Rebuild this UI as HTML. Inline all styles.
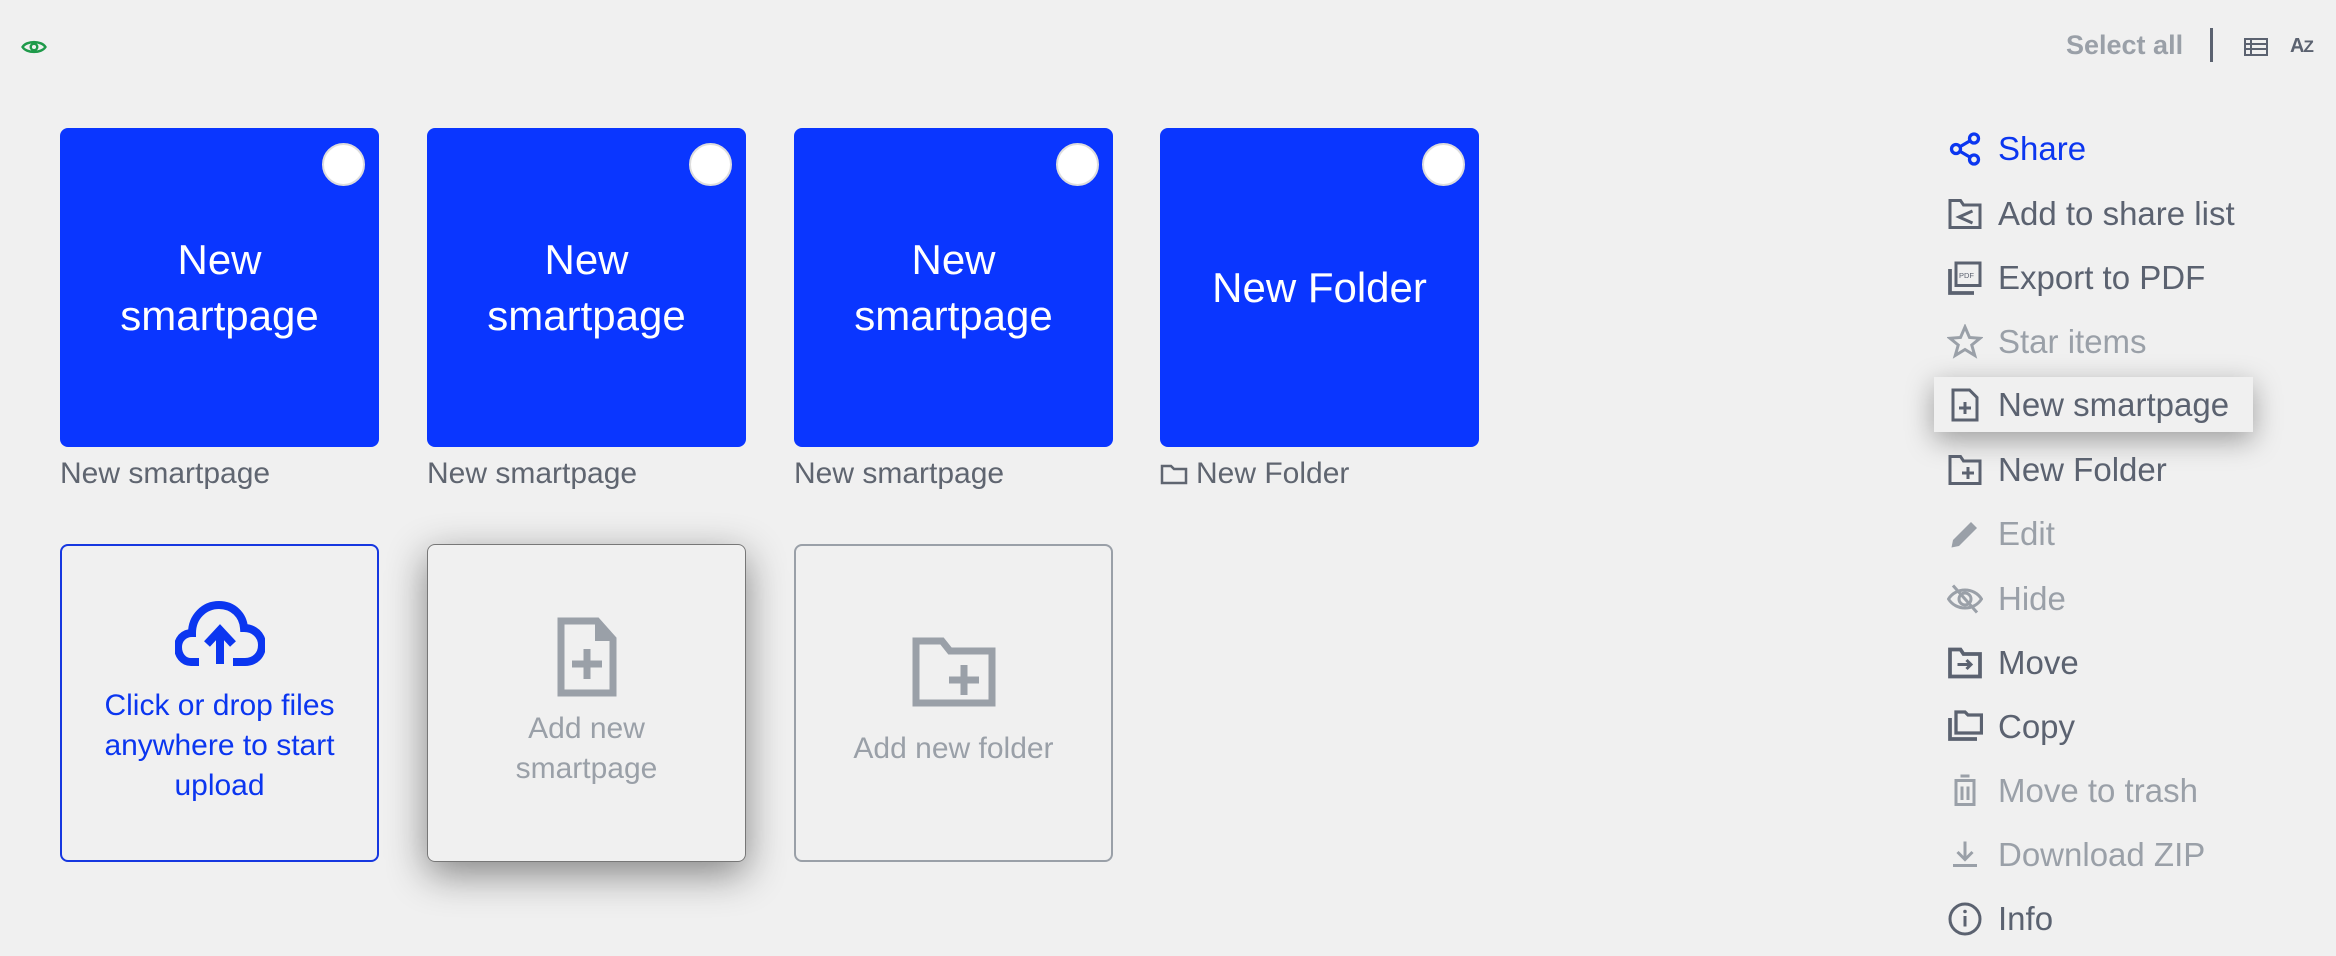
<!DOCTYPE html>
<html><head><meta charset="utf-8"><style>
*{box-sizing:border-box;margin:0;padding:0}
body{width:2336px;height:956px;background:#f0f0f0;font-family:"Liberation Sans",sans-serif;position:relative;overflow:hidden}
.a{position:absolute}
.card{position:absolute;top:128px;width:319px;height:319px;background:#0a36ff;border-radius:8px;color:#fff;font-size:42px;display:flex;align-items:center;justify-content:center;text-align:center;line-height:56px}
.chk{position:absolute;right:14px;top:15px;width:43px;height:43px;border-radius:50%;background:#fff;border:2px solid #ddd}
.lbl{position:absolute;top:457px;font-size:30px;color:#5f6570}
.box{position:absolute;top:544px;width:319px;height:318px;border-radius:8px;display:flex;flex-direction:column;align-items:center;justify-content:center;text-align:center;font-size:30px;line-height:40px}
.mi{position:absolute;left:1944px;height:56px;display:flex;align-items:center;font-size:33px;color:#5b6270}
.mi svg{width:36px;height:36px;margin-left:3px;margin-right:15px}
.dim{color:#9aa0a8}
</style></head><body>
<svg class="a" style="left:20px;top:38px" width="28" height="18" viewBox="0 0 32 22"><path d="M2 11C7 3 25 3 30 11C25 19 7 19 2 11Z" fill="none" stroke="#1f9a4a" stroke-width="3"/><circle cx="16" cy="11" r="4" fill="none" stroke="#1f9a4a" stroke-width="3"/></svg>
<div class="a" style="left:2066px;top:30px;font-size:27px;font-weight:bold;color:#9aa0a8">Select all</div>
<div class="a" style="left:2210px;top:28px;width:3px;height:34px;background:#5b6270"></div>
<svg class="a" style="left:2244px;top:38px" width="24" height="18" viewBox="0 0 24 18"><rect x="1" y="1" width="22" height="16" fill="none" stroke="#5b6270" stroke-width="2"/><path d="M1 6H23M1 11H23M7 1V17" stroke="#5b6270" stroke-width="2"/></svg>
<div class="a" style="left:2290px;top:35px;font-size:20px;color:#5b6270;font-weight:bold;letter-spacing:-1px">A<span style="font-size:17px">Z</span></div>

<div class="card" style="left:60px"><div>New<br>smartpage</div><div class="chk"></div></div>
<div class="card" style="left:427px"><div>New<br>smartpage</div><div class="chk"></div></div>
<div class="card" style="left:794px"><div>New<br>smartpage</div><div class="chk"></div></div>
<div class="card" style="left:1160px"><div>New Folder</div><div class="chk"></div></div>
<div class="lbl" style="left:60px">New smartpage</div>
<div class="lbl" style="left:427px">New smartpage</div>
<div class="lbl" style="left:794px">New smartpage</div>
<div class="lbl" style="left:1160px"><svg width="28" height="22" viewBox="0 0 28 22" style="vertical-align:-2px;margin-right:8px"><path d="M2 3H11L14 6H26V20H2Z" fill="none" stroke="#5f6570" stroke-width="2.5"/></svg>New Folder</div>

<div class="box" style="left:60px;border:2px solid #1637e0;color:#0b36f0">
<svg width="90" height="70" viewBox="0 0 90 70"><path d="M24 62H16C8 62 3 55 3 47C3 39 9 33 17 33C17 17 29 5 44 5C58 5 68 15 69 28C79 28 87 35 87 45C87 55 80 62 70 62H58" fill="none" stroke="#0b36f0" stroke-width="8"/><path d="M45 64V32M32 44L45 30L58 44" fill="none" stroke="#0b36f0" stroke-width="8"/></svg>
<div style="margin-top:16px">Click or drop files<br>anywhere to start<br>upload</div></div>
<div class="box" style="left:427px;border:1px solid #777;box-shadow:0 12px 40px rgba(0,0,0,.45);color:#9aa0a8">
<svg width="60" height="80" viewBox="0 0 60 80"><path d="M4 4H40L56 22V76H4Z" fill="none" stroke="#9aa0a8" stroke-width="7"/><path d="M38 4V24H56" fill="#9aa0a8"/><path d="M30 32V62M15 47H45" stroke="#9aa0a8" stroke-width="7"/></svg>
<div style="margin-top:12px">Add new<br>smartpage</div></div>
<div class="box" style="left:794px;border:2px solid #9aa0a8;color:#9aa0a8">
<svg width="84" height="70" viewBox="0 0 84 70"><path d="M4 4H30L38 14H80V66H4Z" fill="none" stroke="#9aa0a8" stroke-width="7"/><path d="M52 28V58M37 43H67" stroke="#9aa0a8" stroke-width="7"/></svg>
<div style="margin-top:22px">Add new folder</div></div>

<div class="a" style="left:1934px;top:377px;width:319px;height:55px;background:#f0f0f0;box-shadow:0 8px 28px rgba(0,0,0,.35)"></div>
<div class="mi" style="top:121px;color:#0b36f0"><svg viewBox="0 0 24 24"><circle cx="18" cy="5" r="3" fill="none" stroke="#0b36f0" stroke-width="2.2"/><circle cx="6" cy="12" r="3" fill="none" stroke="#0b36f0" stroke-width="2.2"/><circle cx="18" cy="19" r="3" fill="none" stroke="#0b36f0" stroke-width="2.2"/><path d="M8.6 10.5L15.4 6.5M8.6 13.5L15.4 17.5" stroke="#0b36f0" stroke-width="2.2"/></svg>Share</div>
<div class="mi" style="top:186px"><svg viewBox="0 0 24 24"><path d="M2 3H9L11 6H22V21H2Z" fill="none" stroke="#5b6270" stroke-width="2"/><path d="M17 10L8 14L17 18" fill="none" stroke="#5b6270" stroke-width="2"/></svg>Add to share list</div>
<div class="mi" style="top:250px"><svg viewBox="0 0 24 24"><rect x="6" y="2" width="16" height="15" fill="none" stroke="#5b6270" stroke-width="2"/><path d="M2 6V22H18" fill="none" stroke="#5b6270" stroke-width="2.5"/><text x="8" y="12" font-size="5" fill="#5b6270" font-family="Liberation Sans">PDF</text></svg>Export to PDF</div>
<div class="mi dim" style="top:314px"><svg viewBox="0 0 24 24"><path d="M12 2L15 9L22 9.5L16.5 14L18.5 21L12 17L5.5 21L7.5 14L2 9.5L9 9Z" fill="none" stroke="#9aa0a8" stroke-width="2"/></svg>Star items</div>
<div class="mi" style="top:377px"><svg viewBox="0 0 24 24"><path d="M4 2H15L20 7V22H4Z" fill="none" stroke="#5b6270" stroke-width="2"/><path d="M12 10V18M8 14H16" stroke="#5b6270" stroke-width="2"/></svg>New smartpage</div>
<div class="mi" style="top:442px"><svg viewBox="0 0 24 24"><path d="M2 3H9L11 6H22V21H2Z" fill="none" stroke="#5b6270" stroke-width="2"/><path d="M14 10V18M10 14H18" stroke="#5b6270" stroke-width="2"/></svg>New Folder</div>
<div class="mi dim" style="top:506px"><svg viewBox="0 0 24 24"><path d="M3 21L4 16L16 4L20 8L8 20Z" fill="#9aa0a8"/></svg>Edit</div>
<div class="mi dim" style="top:571px"><svg viewBox="0 0 24 24"><path d="M1 12C6 4 18 4 23 12C18 20 6 20 1 12Z" fill="none" stroke="#9aa0a8" stroke-width="2"/><circle cx="12" cy="12" r="4" fill="none" stroke="#9aa0a8" stroke-width="2"/><path d="M4 3L20 21" stroke="#9aa0a8" stroke-width="2"/></svg>Hide</div>
<div class="mi" style="top:635px"><svg viewBox="0 0 24 24"><path d="M2 3H9L11 6H22V21H2Z" fill="none" stroke="#5b6270" stroke-width="2.5"/><path d="M7 13H16M13 10L16 13L13 16" fill="none" stroke="#5b6270" stroke-width="2"/></svg>Move</div>
<div class="mi" style="top:699px"><svg viewBox="0 0 24 24"><path d="M6 2H12L14 4H23V16H6Z" fill="none" stroke="#5b6270" stroke-width="2.2"/><path d="M2 6V20H20" fill="none" stroke="#5b6270" stroke-width="2.5"/></svg>Copy</div>
<div class="mi dim" style="top:763px"><svg viewBox="0 0 24 24"><path d="M5 5H19M6 5V21H18V5M10 9V18M14 9V18M9 2H15" fill="none" stroke="#9aa0a8" stroke-width="2"/></svg>Move to trash</div>
<div class="mi dim" style="top:827px"><svg viewBox="0 0 24 24"><path d="M12 3V15M7 10L12 15L17 10M4 19H20" fill="none" stroke="#9aa0a8" stroke-width="2"/></svg>Download ZIP</div>
<div class="mi" style="top:891px"><svg viewBox="0 0 24 24"><circle cx="12" cy="12" r="10" fill="none" stroke="#5b6270" stroke-width="2"/><path d="M12 10V17" stroke="#5b6270" stroke-width="2"/><circle cx="12" cy="7" r="1.2" fill="#5b6270"/></svg>Info</div>
</body></html>
